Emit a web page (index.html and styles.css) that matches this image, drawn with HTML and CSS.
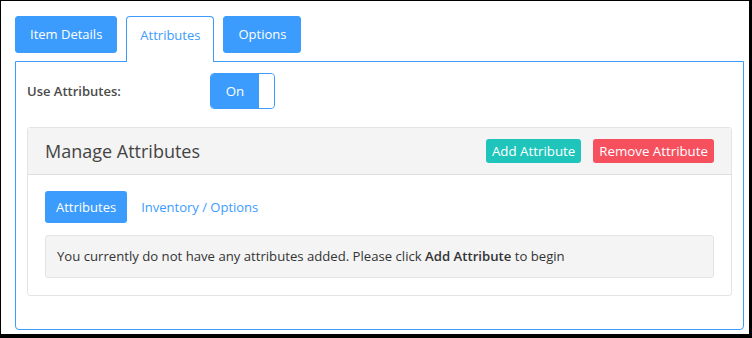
FILE: index.html
```html
<!DOCTYPE html>
<html lang="en">
<head>
    <meta charset="UTF-8">
    <meta name="viewport" content="width=device-width, initial-scale=1.0">
    <title>Item Attributes</title>
    <link rel="stylesheet" href="styles.css">
</head>
<body>
    <div class="frame">
        <div class="tabs">
            <button class="tab">Item Details</button>
            <button class="tab active">Attributes</button>
            <button class="tab">Options</button>
        </div>

        <div class="panel">
            <div class="setting-row">
                <label class="setting-label">Use Attributes:</label>
                <div class="toggle">
                    <span class="toggle-on">On</span>
                    <span class="toggle-knob"></span>
                </div>
            </div>

            <div class="card">
                <div class="card-header">
                    <h3 class="card-title">Manage Attributes</h3>
                    <div class="card-actions">
                        <button class="btn btn-add">Add Attribute</button>
                        <button class="btn btn-remove">Remove Attribute</button>
                    </div>
                </div>
                <div class="card-body">
                    <div class="pills">
                        <button class="pill active">Attributes</button>
                        <a class="pill-link" href="#">Inventory / Options</a>
                    </div>
                    <div class="alert">
                        You currently do not have any attributes added. Please click <strong>Add Attribute</strong> to begin
                    </div>
                </div>
            </div>
        </div>
    </div>
</body>
</html>
```

FILE: styles.css
```css
:root {
    --blue: #3c9cfd;
    --teal: #1fc5bb;
    --red: #f6505f;
    --panel-grey: #f4f4f4;
    --line-grey: #e4e4e4;
    --text: #333;
}

* {
    margin: 0;
    padding: 0;
    box-sizing: border-box;
}

body {
    font-family: 'Open Sans', sans-serif;
    font-size: 13px;
    color: var(--text);
    background: white;
}

.frame {
    width: 752px;
    height: 338px;
    border-style: solid;
    border-color: #000;
    border-width: 1px 3px 4px 1px;
    padding: 15px 5px 0 14px;
}

.tabs {
    display: flex;
    gap: 9px;
    align-items: flex-start;
}

.tab {
    font-family: inherit;
    font-size: 13px;
    height: 37px;
    padding: 0 14px 1px;
    border: 1px solid var(--blue);
    border-radius: 3px;
    background: var(--blue);
    color: white;
    cursor: pointer;
}

.tab.active {
    height: 46px;
    margin-bottom: -1px;
    padding: 0 13px 9px;
    background: white;
    color: var(--blue);
    border-bottom: none;
    border-radius: 4px 4px 0 0;
    position: relative;
    z-index: 1;
}

.panel {
    height: 269px;
    border: 1px solid var(--blue);
    border-radius: 0 0 4px 4px;
    padding: 11px 11px 0 11px;
}

.setting-row {
    display: flex;
    align-items: center;
    height: 36px;
}

.setting-label {
    width: 183px;
    font-weight: 600;
    color: #4a4a4a;
}

.toggle {
    display: flex;
    height: 36px;
    width: 65px;
    border: 1px solid var(--blue);
    border-radius: 4px;
    overflow: hidden;
}

.toggle-on {
    flex: 1;
    background: var(--blue);
    color: white;
    display: flex;
    align-items: center;
    justify-content: center;
    font-size: 13.3px;
}

.toggle-knob {
    width: 15px;
    background: white;
    border-radius: 3px;
}

.card {
    margin-top: 18px;
    border: 1px solid var(--line-grey);
    border-radius: 3px;
}

.card-header {
    display: flex;
    justify-content: space-between;
    align-items: center;
    height: 47px;
    padding: 0 17px;
    background: var(--panel-grey);
    border-bottom: 1px solid #dedede;
}

.card-title {
    font-size: 18px;
    font-weight: 400;
    color: #444;
}

.card-actions {
    display: flex;
    gap: 12px;
}

.btn {
    font-family: inherit;
    font-size: 13.3px;
    height: 24px;
    padding: 0 6px;
    border: none;
    border-radius: 3px;
    color: white;
    cursor: pointer;
}

.btn-add {
    background: var(--teal);
}

.btn-remove {
    background: var(--red);
}

.card-body {
    padding: 16px 17px 17px;
}

.pills {
    display: flex;
    align-items: center;
    gap: 2px;
}

.pill {
    font-family: inherit;
    font-size: 13px;
    height: 32px;
    padding: 0 11px;
    border: none;
    border-radius: 3px;
    background: var(--blue);
    color: white;
}

.pill-link {
    color: var(--blue);
    text-decoration: none;
    padding: 0 12px;
}

.alert {
    margin-top: 12px;
    height: 43px;
    line-height: 41px;
    padding: 0 11px;
    font-size: 13.15px;
    background: var(--panel-grey);
    border: 1px solid var(--line-grey);
    border-radius: 3px;
    color: #333;
}

.alert strong {
    font-weight: 600;
}
```
